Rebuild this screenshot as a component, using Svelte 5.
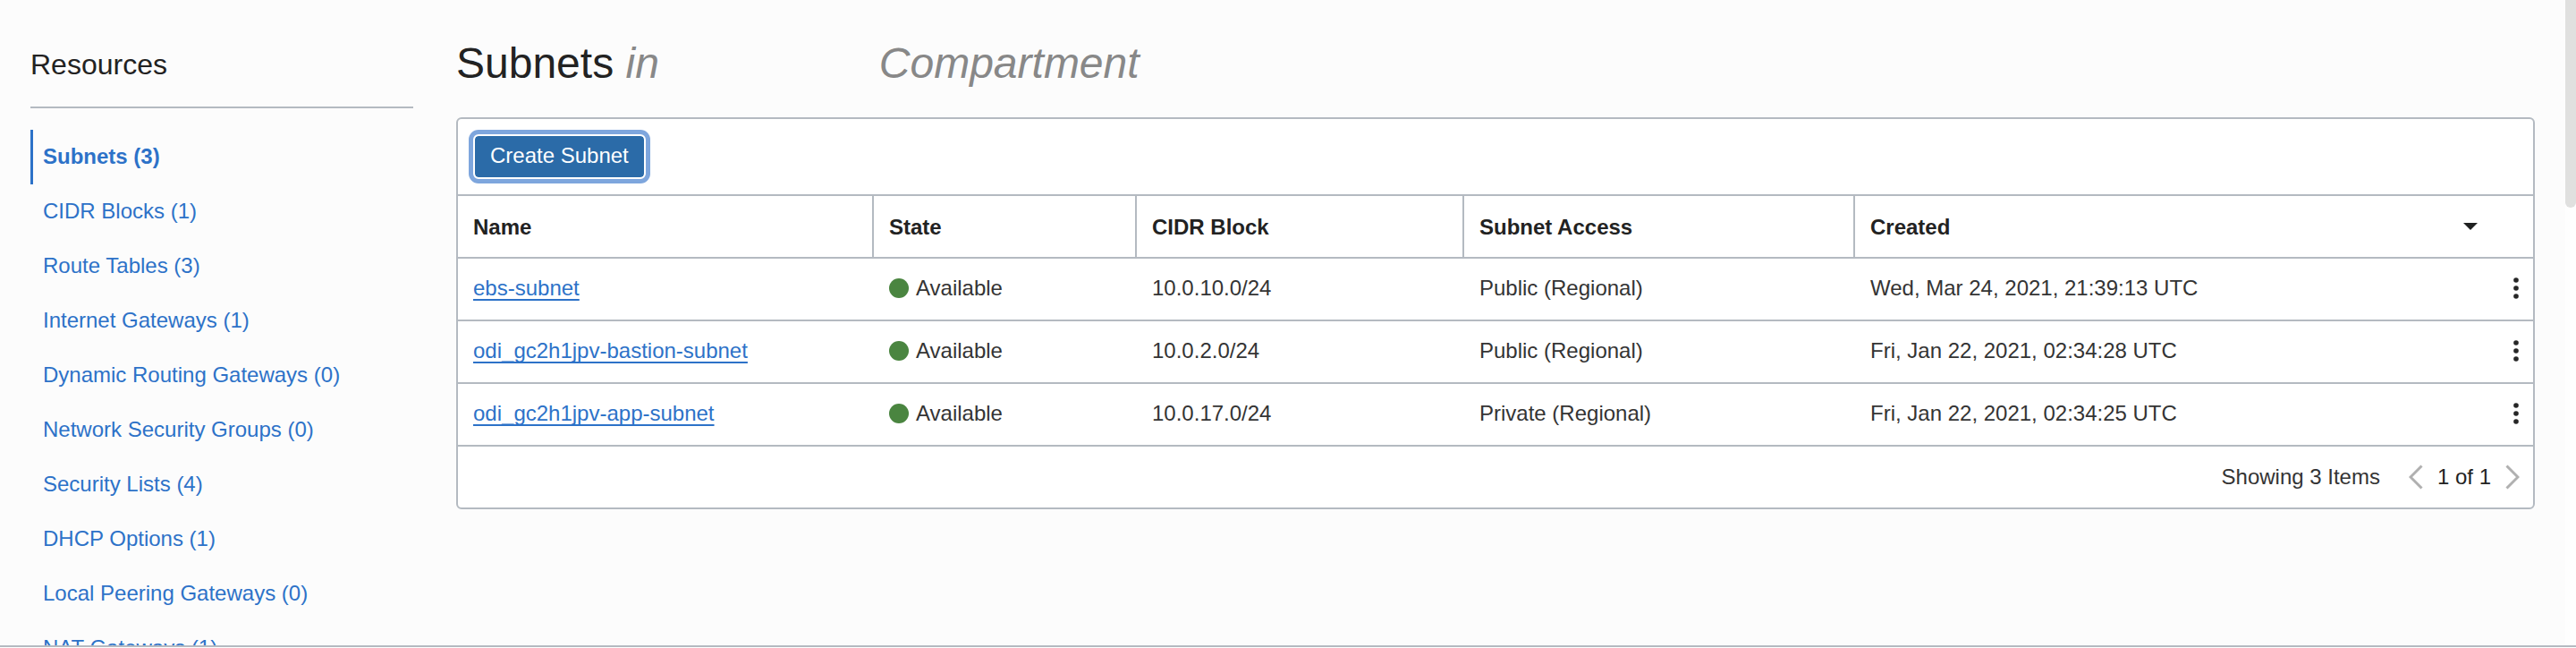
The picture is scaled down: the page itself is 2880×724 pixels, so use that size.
<script>
  const resources = [
    { label: 'Subnets', count: 3 },
    { label: 'CIDR Blocks', count: 1 },
    { label: 'Route Tables', count: 3 },
    { label: 'Internet Gateways', count: 1 },
    { label: 'Dynamic Routing Gateways', count: 0 },
    { label: 'Network Security Groups', count: 0 },
    { label: 'Security Lists', count: 4 },
    { label: 'DHCP Options', count: 1 },
    { label: 'Local Peering Gateways', count: 0 },
    { label: 'NAT Gateways', count: 1 },
  ];
  let active = $state('Subnets');

  const subnets = [
    { name: 'ebs-subnet', state: 'Available', cidr: '10.0.10.0/24', access: 'Public (Regional)', created: 'Wed, Mar 24, 2021, 21:39:13 UTC' },
    { name: 'odi_gc2h1jpv-bastion-subnet', state: 'Available', cidr: '10.0.2.0/24', access: 'Public (Regional)', created: 'Fri, Jan 22, 2021, 02:34:28 UTC' },
    { name: 'odi_gc2h1jpv-app-subnet', state: 'Available', cidr: '10.0.17.0/24', access: 'Private (Regional)', created: 'Fri, Jan 22, 2021, 02:34:25 UTC' },
  ];
</script>

<div class="page">
  <div class="scroller">
    <aside>
      <h2>Resources</h2>
      <nav aria-label="Resources">
        {#each resources as item}
          <a
            href="#resources"
            class:active={item.label === active}
            onclick={() => (active = item.label)}>{item.label} ({item.count})</a>
        {/each}
      </nav>
    </aside>

    <main>
      <h1>Subnets <em>in</em><em class="compartment">Compartment</em></h1>
      <section class="panel">
        <div class="toolbar">
          <button type="button" class="create">Create Subnet</button>
        </div>
        <table>
          <colgroup>
            <col class="c-name" /><col class="c-state" /><col class="c-cidr" /><col class="c-access" /><col /><col class="c-menu" />
          </colgroup>
          <thead>
            <tr>
              <th scope="col">Name</th>
              <th scope="col">State</th>
              <th scope="col">CIDR Block</th>
              <th scope="col">Subnet Access</th>
              <th scope="col" colspan="2">
                <div class="sortable">
                  <span>Created</span>
                  <button type="button" class="icon" aria-label="Sort by created">
                    <svg width="16" height="8" viewBox="0 0 16 8"><path d="M0 0h16L8 8z" fill="#1f2020" /></svg>
                  </button>
                </div>
              </th>
            </tr>
          </thead>
          <tbody>
            {#each subnets as s}
              <tr>
                <td><a href="#subnet">{s.name}</a></td>
                <td><div class="state"><span class="dot"></span>{s.state}</div></td>
                <td>{s.cidr}</td>
                <td>{s.access}</td>
                <td>{s.created}</td>
                <td class="menu">
                  <button type="button" class="icon" aria-label="Actions">
                    <svg width="6" height="24" viewBox="0 0 6 24" fill="#262626">
                      <circle cx="3" cy="3" r="2.8" /><circle cx="3" cy="12" r="2.8" /><circle cx="3" cy="21" r="2.8" />
                    </svg>
                  </button>
                </td>
              </tr>
            {/each}
          </tbody>
        </table>
        <footer>
          <span class="showing">Showing 3 Items</span>
          <button type="button" class="icon" aria-label="Previous page">
            <svg width="16" height="28" viewBox="0 0 16 28"><path d="M14.5 1.5L2 14l12.500 12.500" fill="none" stroke="#b0b0b0" stroke-width="3" /></svg>
          </button>
          <span class="count">1 of 1</span>
          <button type="button" class="icon" aria-label="Next page">
            <svg width="16" height="28" viewBox="0 0 16 28"><path d="M1.500 1.500L14 14 1.500 26.500" fill="none" stroke="#b0b0b0" stroke-width="3" /></svg>
          </button>
        </footer>
      </section>
    </main>

    <div class="track"><div class="thumb"></div></div>
  </div>
</div>

<style>
  :global(body) {
    margin: 0;
    background: #fff;
  }
  .page {
    box-sizing: border-box;
    height: 100vh;
    padding-bottom: 1px;
    font-family: 'Liberation Sans', Arial, sans-serif;
    font-size: 24px;
    line-height: 28px;
    color: #343434;
  }
  .scroller {
    box-sizing: border-box;
    height: 100%;
    overflow: hidden;
    display: flex;
    background: #fcfcfc;
    border-bottom: 2px solid #b4bac1;
  }
  aside {
    flex: 0 0 428px;
    margin: 0 48px 0 34px;
  }
  h2 {
    margin: 0 0 24px;
    padding: 54px 0 29px;
    border-bottom: 2px solid #b4bac1;
    font-size: 32px;
    line-height: 36px;
    font-weight: 300;
    color: #222;
  }
  nav {
    display: flex;
    flex-direction: column;
  }
  nav a {
    padding: 16px 11px 17px;
    border-left: 3px solid transparent;
    color: #2d72c8;
    text-decoration: none;
  }
  nav a.active {
    border-left-color: #2d72c8;
    font-weight: 700;
  }
  main {
    flex: 1;
    min-width: 0;
  }
  h1 {
    margin: 0;
    padding: 43px 0 32px;
    font-size: 48px;
    line-height: 56px;
    font-weight: 400;
    color: #222;
    white-space: nowrap;
  }
  h1 em {
    color: #888;
  }
  .compartment {
    margin-left: 246px;
  }
  .panel {
    border: 2px solid #b4bac1;
    border-radius: 6px;
    background: #fff;
    overflow: hidden;
  }
  .toolbar {
    padding: 17px;
    border-bottom: 2px solid #b4bac1;
  }
  .create {
    display: block;
    height: 50px;
    padding: 0 17px 2px;
    border: 2px solid #fff;
    border-radius: 6px;
    background: #2b6ba8;
    background-clip: padding-box;
    box-shadow: 0 0 0 5px #7ea6dd;
    font: inherit;
    color: #fff;
  }
  table {
    width: 100%;
    table-layout: fixed;
    border-collapse: separate;
    border-spacing: 0;
  }
  .c-name { width: 465px; }
  .c-state { width: 294px; }
  .c-cidr { width: 366px; }
  .c-access { width: 437px; }
  .c-menu { width: 48px; }
  th,
  td {
    height: 66px;
    padding: 0 16px 2px 17px;
    border-bottom: 2px solid #b4bac1;
    text-align: left;
    white-space: nowrap;
  }
  th {
    padding-top: 2px;
    padding-bottom: 0;
    border-right: 2px solid #b4bac1;
    color: #222;
  }
  th:last-child {
    border-right: 0;
  }
  td a {
    color: #2d72c8;
    text-decoration: underline 2px;
    text-underline-offset: 4px;
    text-decoration-skip-ink: none;
  }
  .sortable {
    display: flex;
    align-items: center;
    justify-content: space-between;
    padding-right: 46px;
  }
  .sortable .icon {
    padding-bottom: 3px;
  }
  .state {
    display: flex;
    align-items: center;
    gap: 8px;
  }
  .dot {
    width: 22px;
    height: 22px;
    border-radius: 50%;
    background: #4a8540;
  }
  .icon {
    display: flex;
    padding: 0;
    border: 0;
    background: none;
  }
  .menu .icon {
    margin-left: auto;
  }
  footer {
    display: flex;
    align-items: center;
    justify-content: flex-end;
    height: 68px;
    padding: 0 15px;
  }
  .showing {
    margin-right: 32px;
  }
  .count {
    margin: 0 16px;
    color: #222;
  }
  .track {
    flex: 0 0 12px;
    margin-left: 34px;
    background: #fefefe;
  }
  .thumb {
    height: 232px;
    border-radius: 0 0 6px 6px;
    background: #e0e0df;
  }
</style>
